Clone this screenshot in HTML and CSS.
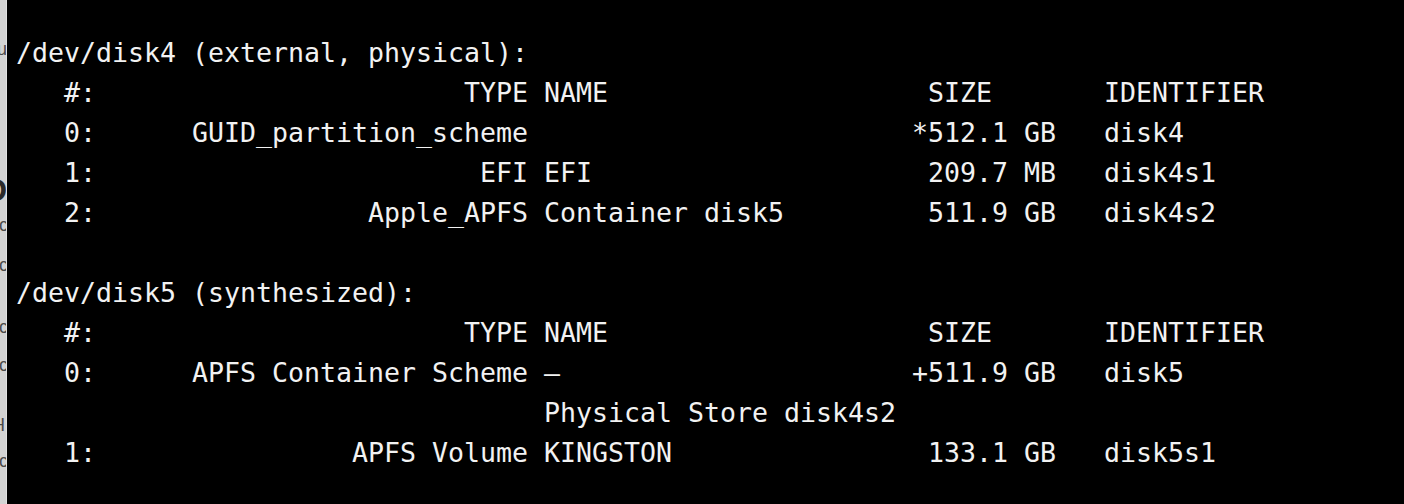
FILE: index.html
```html
<!DOCTYPE html>
<html>
<head>
<meta charset="utf-8">
<link rel="stylesheet" href="styles.css">
</head>
<body>
<div class="screen">
  <div class="behind">
    <span class="g g-u">u</span>
    <span class="g g-d">D</span>
    <span class="g g-c1">c</span>
    <span class="g g-c2">c</span>
    <span class="g g-c3">c</span>
    <span class="g g-c4">c</span>
    <span class="g g-h">H</span>
    <span class="g g-c5">c</span>
  </div>
  <div class="terminal">
<pre class="output">/dev/disk4 (external, physical):
   #:                       TYPE NAME                    SIZE       IDENTIFIER
   0:      GUID_partition_scheme                        *512.1 GB   disk4
   1:                        EFI EFI                     209.7 MB   disk4s1
   2:                 Apple_APFS Container disk5         511.9 GB   disk4s2

/dev/disk5 (synthesized):
   #:                       TYPE NAME                    SIZE       IDENTIFIER
   0:      APFS Container Scheme –                      +511.9 GB   disk5
                                 Physical Store disk4s2
   1:                APFS Volume KINGSTON                133.1 GB   disk5s1</pre>
  </div>
</div>
</body>
</html>
```
FILE: styles.css
```css
html, body {
  margin: 0;
  padding: 0;
  background: #000;
}
.screen {
  display: flex;
  width: 1404px;
  height: 504px;
  overflow: hidden;
  background: #000;
}
.behind {
  width: 6px;
  flex: 0 0 6px;
  height: 504px;
  background: #d3d3d3;
  border-right: 1px solid #e2e2e2;
  overflow: hidden;
  display: flex;
  flex-direction: column;
  font-family: "Liberation Sans", sans-serif;
  color: #4a4a4a;
  line-height: 1;
}
.g {
  display: block;
  height: 0;
  overflow: visible;
  margin-left: -3px;
  font-size: 18px;
}
.g-u { margin-top: 40px; }
.g-d { margin-top: 134px; font-size: 32px; font-weight: bold; margin-left: -16px; color: #2a2a2a; }
.g-c1 { margin-top: 42px; margin-left: -1px; }
.g-c2 { margin-top: 40px; margin-left: -1px; }
.g-c3 { margin-top: 62px; margin-left: -1px; }
.g-c4 { margin-top: 38px; margin-left: -1px; }
.g-h { margin-top: 60px; margin-left: -8px; }
.g-c5 { margin-top: 36px; margin-left: -1px; }
.terminal {
  flex: 1;
  padding: 33px 0 0 9px;
}
.output {
  margin: 0;
  font-family: "DejaVu Sans Mono", monospace;
  font-size: 26.58px;
  line-height: 40px;
  color: #f2f2f2;
  white-space: pre;
}
```
